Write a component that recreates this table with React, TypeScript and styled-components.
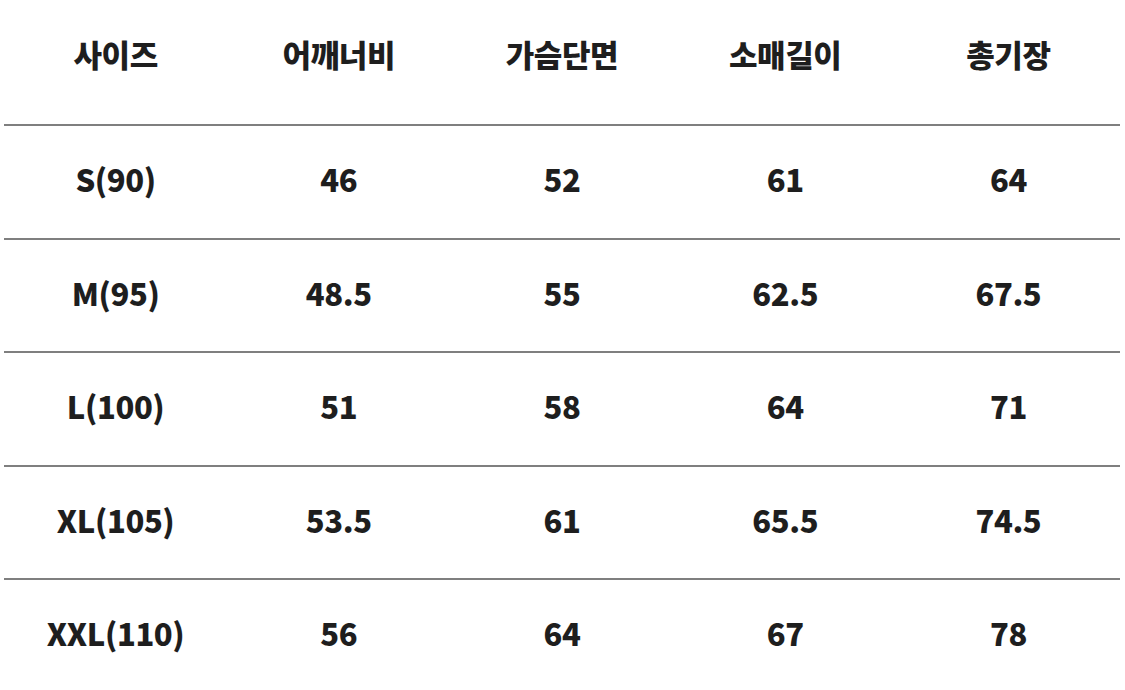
import React from "react";
import styled, { createGlobalStyle } from "styled-components";

const Global = createGlobalStyle`
  html, body { margin: 0; padding: 0; background: #ffffff; }
  body { font-family: "Noto Sans CJK KR", "Noto Sans", sans-serif; }
`;

const Table = styled.div`
  width: 1116px;
  margin-left: 4px;
  display: flex;
  flex-direction: column;
`;

const Row = styled.div<{ $header?: boolean }>`
  display: grid;
  grid-template-columns: repeat(5, 1fr);
  align-items: center;
  height: ${(p) => (p.$header ? "124px" : "113.5px")};
  padding-bottom: ${(p) => (p.$header ? "17px" : "6px")};
  box-sizing: border-box;
  border-top: ${(p) => (p.$header ? "none" : "2px solid #7f7f7f")};
`;

const Cell = styled.div`
  text-align: center;
  font-size: 31px;
  font-weight: 900;
  color: #1e1e1e;
  letter-spacing: -0.4px;
  line-height: 1;
`;

const headers = ["사이즈", "어깨너비", "가슴단면", "소매길이", "총기장"];
const rows = [
  ["S(90)", "46", "52", "61", "64"],
  ["M(95)", "48.5", "55", "62.5", "67.5"],
  ["L(100)", "51", "58", "64", "71"],
  ["XL(105)", "53.5", "61", "65.5", "74.5"],
  ["XXL(110)", "56", "64", "67", "78"],
];

export default function App() {
  return (
    <>
      <Global />
      <Table>
        <Row $header>
          {headers.map((h) => (
            <Cell key={h}>{h}</Cell>
          ))}
        </Row>
        {rows.map((r) => (
          <Row key={r[0]}>
            {r.map((c, i) => (
              <Cell key={i}>{c}</Cell>
            ))}
          </Row>
        ))}
      </Table>
    </>
  );
}
